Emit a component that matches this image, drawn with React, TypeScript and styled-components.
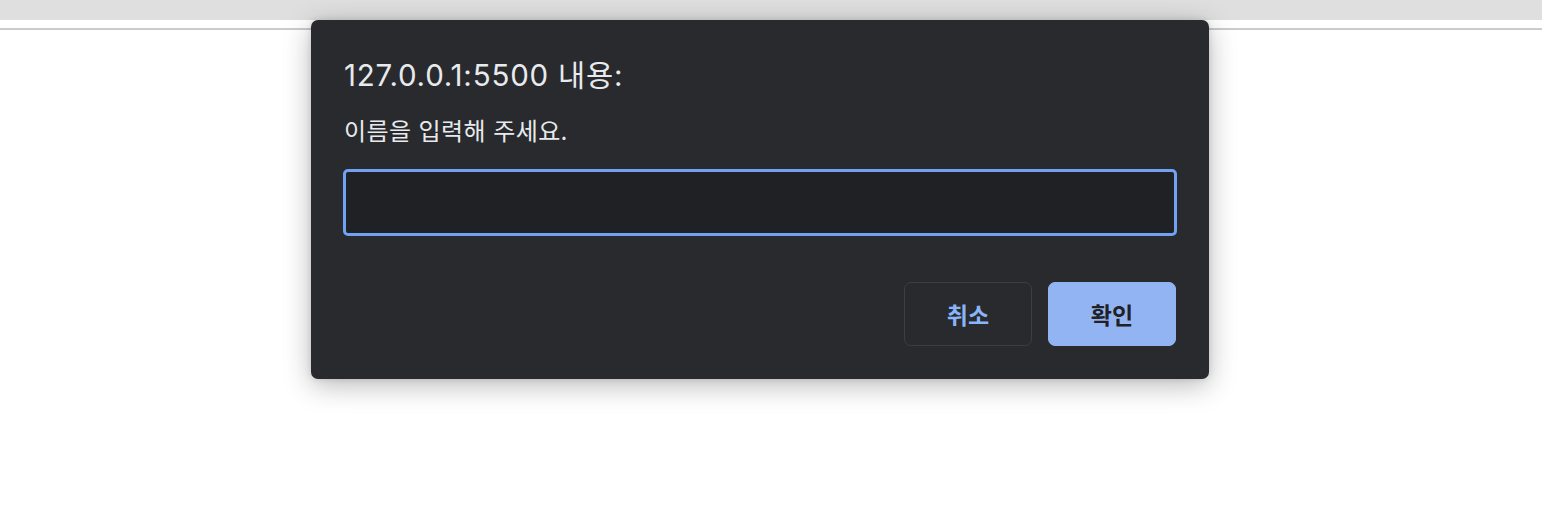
import React from "react";
import styled, { createGlobalStyle } from "styled-components";

const Global = createGlobalStyle`
  html, body { margin: 0; padding: 0; background: #ffffff; }
  body { font-family: Inter, "Noto Sans CJK KR", sans-serif; }
`;

const Page = styled.div`
  position: relative;
  width: 1542px;
  height: 512px;
  overflow: hidden;
  background: #ffffff;
`;

const TopBar = styled.div`
  height: 20px;
  background: #dfdfdf;
`;

const ToolStrip = styled.div`
  height: 8px;
  background: #ffffff;
  border-bottom: 2px solid #cbcbcb;
`;

const Dialog = styled.div`
  position: absolute;
  left: 311px;
  top: 20px;
  width: 898px;
  height: 359px;
  box-sizing: border-box;
  padding: 0 32px 33px 32px;
  background: #292a2d;
  border-radius: 7px;
  box-shadow: 0 6px 28px rgba(0, 0, 0, 0.28), 0 0 6px rgba(0, 0, 0, 0.12);
  display: flex;
  flex-direction: column;
  font-family: Inter, "Noto Sans CJK KR", sans-serif;
  color: #e8eaed;
`;

const Title = styled.div`
  margin-top: 36px;
  height: 38px;
  line-height: 38px;
  font-size: 29.5px;
  letter-spacing: 0.8px;
  padding-left: 1px;
`;

const Message = styled.div`
  margin-top: 22px;
  height: 32px;
  line-height: 32px;
  font-size: 24px;
  letter-spacing: 0.4px;
  padding-left: 1px;
`;

const Input = styled.input`
  margin-top: 21px;
  height: 67px;
  width: 100%;
  box-sizing: border-box;
  background: #202124;
  border: 3px solid #72a0f4;
  border-radius: 5px;
  outline: none;
  color: #e8eaed;
  font-size: 22px;
  padding: 0 14px;
`;

const Actions = styled.div`
  margin-top: auto;
  display: flex;
  justify-content: flex-end;
  gap: 16px;
  padding-right: 1px;
`;

const Button = styled.button<{ $primary?: boolean }>`
  width: 128px;
  height: 64px;
  box-sizing: border-box;
  border-radius: 7px;
  font-family: Inter, "Noto Sans CJK KR", sans-serif;
  font-size: 23px;
  font-weight: 700;
  cursor: pointer;
  padding: 0;
  border: 1px solid ${(p) => (p.$primary ? "#93b4f3" : "#3d3e42")};
  background: ${(p) => (p.$primary ? "#93b4f3" : "#292a2d")};
  color: ${(p) => (p.$primary ? "#202124" : "#8ab4f8")};
`;

export default function App() {
  return (
    <Page>
      <Global />
      <TopBar />
      <ToolStrip />
      <Dialog>
        <Title>127.0.0.1:5500 내용:</Title>
        <Message>이름을 입력해 주세요.</Message>
        <Input autoFocus={false} />
        <Actions>
          <Button>취소</Button>
          <Button $primary>확인</Button>
        </Actions>
      </Dialog>
    </Page>
  );
}
